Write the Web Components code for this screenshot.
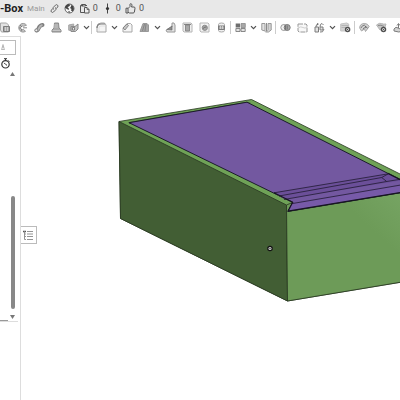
<!DOCTYPE html>
<html lang="en">
<head>
<meta charset="utf-8">
<title>Box</title>
<style>
html,body{height:100%;margin:0}
body{background:#fff;overflow:hidden;font-family:Roboto,"Noto Sans",sans-serif;color:#333}
</style>
</head>
<body>
<cad-app></cad-app>
<script>
const C = 'fill="none" stroke="#666" stroke-width="1"';
const ICONS = {
  thicken: `<path d="M.5 1h6l2 2v7h-7l-1-2z" fill="#ddd" stroke="#999"/><path d="M3.500 4.500h6v5h-6z" fill="#999" stroke="#666"/><path d="M5.500 5v4M7.500 5v4" stroke="#ddd" stroke-width=".7"/>`,
  revolve: `<path d="M9.500 3.200A4.300 4.300 0 1 0 8.500 9.300L6.500 7.500A1.900 1.900 0 1 1 6.500 4.300z" fill="#bbb" stroke="#888"/><path d="M3 3l2 2M2 6h2M4 9l1-2M6 5.800h4" stroke="#555" stroke-width=".8"/>`,
  sweep: `<path d="M2.500 8.500c3 0 1-5 6-5.500" fill="none" stroke="#666" stroke-width="4" stroke-linecap="round"/><path d="M3 8.200c3 0 1-4.400 5.500-5.200" fill="none" stroke="#aaa" stroke-width="2"/><circle cx="2.300" cy="8.300" r="1.400" fill="#eee" stroke="#666" stroke-width=".8"/>`,
  loft: `<path d="M3.500 1h4l.5 5 2 2v2H1V8l2-2z" fill="#999" stroke="#777"/><path d="M1.500 8.500h8M4 2v4M6 2v4" stroke="#ccc" stroke-width=".7"/>`,
  boxes: `<path d="M.7 3l5-1v7l-5-.8z" fill="#aaa" stroke="#999"/><path d="M3 4.500h4l3-2.500v5L7.500 9.500H3z" fill="#bbb" stroke="#777"/><path d="M4.500 5.500h2v2.500h-2z" fill="#eee" stroke="#555" stroke-width=".8"/>`,
  fillet: `<path d="M1 10V5q0-4 4-4h3.500l1.500 2v7z" fill="#f4f4f4" stroke="#999"/><path d="M1 6q0-4 4-4h4" fill="none" stroke="#666" stroke-width="1.200"/><path d="M3 10V6q0-2 2-2h5" fill="none" stroke="#ccc" stroke-width=".6"/>`,
  chamfer: `<path d="M1 10V6l4-4.500h3.500L10 3v7z" fill="#f4f4f4" stroke="#999"/><path d="M1 6l4-4 1.500 1.500L3 8z" fill="#bbb" stroke="#666" stroke-width=".8"/>`,
  draft: `<path d="M1 9.500l3-8h4l1.500 1.500v6.500z" fill="#999" stroke="#888"/><path d="M3.500 9l2-7M6 9l1-7" stroke="#666" stroke-width=".8"/>`,
  rib: `<path d="M1 8l6-3V1h2l1 2v7H2z" fill="#ddd" stroke="#888"/><path d="M2 7.500l5-3.500v4z" fill="#777" stroke="#555" stroke-width=".7"/>`,
  shell: `<path d="M1 1h8l1 1v8H2L1 9z" fill="#eee" stroke="#aaa"/><path d="M3.500 3h4v6h-4z" fill="#999" stroke="#777"/><path d="M2 2.500h7" stroke="#555" stroke-width=".8"/>`,
  hole: `<path d="M1 1h8l1 1v8H2L1 9z" fill="#f2f2f2" stroke="#aaa"/><circle cx="5.800" cy="5.800" r="2.600" fill="#999" stroke="#777"/><path d="M4 6.500q2-2 3.500-1.500" stroke="#555" fill="none"/>`,
  cyl: `<path d="M2.500 2.500v6q0 1.500 3 1.500t3-1.500v-6Q8.500 1 5.500 1t-3 1.500z" fill="#eee" stroke="#999"/><path d="M2.500 4h6v3.500h-6z" fill="#999" stroke="#666"/><path d="M4.500 4v3M6.500 4v3" stroke="#ddd" stroke-width=".7"/>`,
  pattern: `<path d="M.7 1.500h4.300v4H.7z" fill="#555"/><path d="M6 1.500h4.300v4H6z" fill="#999" stroke="#777" stroke-width=".8"/><path d="M.9 6.500H5v3H.9zM6 6.500h4.200v3H6z" fill="#ddd" stroke="#666" stroke-width=".9"/>`,
  mirror: `<path d="M.8 1.500H4V9L.8 8z" fill="#ddd" stroke="#888"/><path d="M10.200 1.500H7v6L4.500 10h3l2.700-2z" fill="#ccc" stroke="#888"/><path d="M5.500 1v8" stroke="#777"/>`,
  bool: `<circle cx="3.800" cy="5.500" r="3" fill="#eee" stroke="#888"/><circle cx="7.200" cy="5.500" r="3" fill="#999" stroke="#666"/><path d="M5.500 3.200v4.600M7.200 3.500v4" stroke="#555" stroke-width=".9"/>`,
  split: `<path d="M1 2h8l1 1v7H2L1 9z" fill="#f7f7f7" stroke="#888" stroke-dasharray="5 1"/><path d="M1 6q3-2 5-.5T10 5" fill="none" stroke="#bbb" stroke-width=".8"/>`,
  transform: `<path d="M1 5h3.500v5H1zM6 5h3v3H6z" fill="#ddd" stroke="#666"/><path d="M2 5q0-3 2-3M6 5q0-3.500 2-3.500L9.500 3M6 10q3 1 4-3" fill="none" stroke="#666"/><path d="M3 1l2 1-2 1.500z" fill="#555"/>`,
  del: `<path d="M.7 2l6-1 2 1v5l-3 2h-5z" fill="#ccc" stroke="#bbb"/><path d="M1.500 3.500h7M1.500 5.500h5" stroke="#999" stroke-width=".7"/><circle cx="7.600" cy="7.600" r="2" fill="#fff" stroke="#333" stroke-width="1.500"/><path d="M7 7l1.200 1.200" stroke="#333"/>`,
  surface: `<path d="M.7 6q0-4.500 5-4.500 3 0 4.500 3L6.500 9.500 5.500 7 2.500 9z" fill="#ccc" stroke="#999"/><path d="M2 6q1-3 4-3M4 7.500q0-2 3-2" stroke="#666" fill="none"/><path d="M6 4l2.500 2" stroke="#444"/>`,
  delsurf: `<path d="M.5 3q3-2.500 5-1.500T10 2L8.500 6.500 4 8z" fill="#bbb" stroke="#aaa"/><path d="M2 3.500q3-1 6 1" stroke="#777" fill="none"/><circle cx="7.500" cy="7.500" r="2" fill="#fff" stroke="#333" stroke-width="1.500"/><path d="M7 7l1.200 1.200" stroke="#333"/>`,
  move: `<path d="M1 7q2-3 4-1t5 0v3q-4 2-9 0z" fill="#ccc" stroke="#666"/><path d="M5.500 6V2M4 3.500l1.500-2 1.500 2" fill="none" stroke="#666"/>`,
  link: `<path d="M5 6.600 4.300 6q-.7-.8 0-1.600l2.200-2.300q1-1 2 0 1 .9.200 1.900L7.300 5.500M6 4.400l.8.700q.7.800 0 1.600L4.500 9q-1 1-2 0-1-.9-.1-1.900l1.300-1.500" ${C}/>`,
  globe: `<circle cx="5.500" cy="5.500" r="4.500" fill="#f5f5f5" stroke="#555" stroke-width=".9"/><path d="M1 5q0-3 3.500-4l2 .8L5 3.500 3.500 4 5 5.800 4.500 7 3 6z M7 2l2 1 1 3-1.500 2.500L7 7.500 7.500 6 6 5l1-1.500z M4 8l2 .5-.5 1.500z" fill="#444"/>`,
  copy: `<path d="M4 2.500H1.500v7H5M7 2.500H8M2.500 1.500h4v1.500h-4z" fill="none" stroke="#555"/><path d="M5.500 4.500H8l2 2v3.500H5.500z" fill="#eee" stroke="#555"/><path d="M8 4.500v2h2" fill="none" stroke="#555" stroke-width=".8"/>`,
  version: `<path d="M5.500.5v10" stroke="#444"/><circle cx="5.500" cy="5.500" r="1.600" fill="#333"/>`,
  like: `<path d="M1 5.200h2V10H1zM3 5.500l2-2V1.300q.2-.8 1-.6 1 .3 1 1.500L6.500 4H9q1.200.2 1 1.200L9.400 9q-.2.900-1.200 1H4.500L3 9.300" fill="none" stroke="#555" stroke-linejoin="round"/>`,
  timer: `<circle cx="5.500" cy="6.300" r="3.700" fill="#fff" stroke="#333" stroke-width="1.200"/><path d="M4 .7h3M5.500 1v2M8.500 2.500l1 1M5.500 6.300 4 4.800M5.500 6.300l1.500 1" stroke="#333"/>`,
  outline: `<path d="M0 1.500h3" stroke="#555" stroke-width="1.500"/><path d="M4 1.500h6M4 4h6M4 6.500h6M4 9.500h6M1.500 1v8.500M1.500 4H3M1.500 6.500H3M1.500 9.500H3" stroke="#888" fill="none" stroke-width=".9"/>`,
  chev: `<path d="M3 4.200 5.500 6.700 8 4.200" fill="none" stroke="#333" stroke-width="1.200"/>`
};

const define = (name, html) => {
  const t = document.createElement('template');
  t.innerHTML = html;
  customElements.define(name, class extends HTMLElement {
    constructor() {
      super();
      this.attachShadow({mode: 'open'}).append(t.content.cloneNode(true));
    }
  });
};

customElements.define('cad-icon', class extends HTMLElement {
  connectedCallback() {
    if (this.shadowRoot) return;
    this.attachShadow({mode: 'open'}).innerHTML =
      `<style>:host{display:block;flex:none;width:11px;height:11px}svg{display:block;width:100%;height:100%}</style>
       <svg viewBox="0 0 11 11" aria-hidden="true">${ICONS[this.getAttribute('name')]}</svg>`;
  }
});

customElements.define('tool-button', class extends HTMLElement {
  connectedCallback() {
    if (this.shadowRoot) return;
    const n = this.getAttribute('icon');
    this.attachShadow({mode: 'open'}).innerHTML =
      `<style>:host{display:flex;flex:none;width:17px;height:17px;opacity:.85}
       :host([icon=chev]){width:9px}
       button{all:unset;display:flex;flex:1;align-items:center;justify-content:center;min-width:0}</style>
       <button type="button" aria-label="${n}"><cad-icon name="${n}"></cad-icon></button>`;
  }
});

define('tool-separator', `<style>:host{flex:none;width:1px;height:13px;margin-right:1px;background:#ccc}</style>`);

define('doc-header', `<style>
:host{display:flex;align-items:center;box-sizing:border-box;height:18px;padding-bottom:1px;background:#e8e8e8;white-space:nowrap}
h1{margin:0;font-size:11px;line-height:17px;font-weight:700;color:#222}
span{font-size:8px;line-height:17px;color:#999;margin:0 4px}
button{all:unset;display:flex;align-items:center;gap:3px;font-size:9px;line-height:17px;color:#555}
nav{display:flex;align-items:center;gap:4px}
</style>
<h1>-Box</h1><span>Main</span>
<nav><button type="button" aria-label="Link"><cad-icon name="link"></cad-icon></button>
<button type="button" aria-label="Public"><cad-icon name="globe"></cad-icon></button>
<button type="button"><cad-icon name="copy"></cad-icon>0</button>
<button type="button"><cad-icon name="version"></cad-icon>0</button>
<button type="button"><cad-icon name="like"></cad-icon>0</button></nav>`);

const tools = 'thicken revolve sweep loft boxes chev | fillet chev chamfer draft chev rib shell hole cyl | pattern chev mirror | bool split transform chev del | surface delsurf move';
define('tool-bar', `<style>
:host{display:flex;align-items:center;height:18px;background:#fff;overflow:hidden}
div{display:flex;align-items:center;margin-left:-3px}
</style><div>${tools.split(' ').map(t => t === '|' ? '<tool-separator></tool-separator>' : `<tool-button icon="${t}"></tool-button>`).join('')}</div>`);

define('feature-panel', `<style>
:host{display:flex;flex-direction:column;box-sizing:border-box;width:21px;flex:none;border:solid #ddd;border-width:1px 1px 0 0;background:#fff}
label{display:flex;align-items:center;box-sizing:border-box;height:15px;margin:3px 4px 0 0;border:solid #bbb;border-width:1px 1px 1px 0}
svg{display:block}
input{all:unset;flex:1;min-width:0;width:0}
.timer{all:unset;display:block;margin-top:2px;height:12px}
.rail{display:flex;flex-direction:column;align-items:center;box-sizing:border-box;height:69%;padding:0 1px 2px 8px;margin:3px 2px 0 0;border-bottom:1px solid #ddd}
.space{flex:1}
.thumb{width:4px;height:46%;border-radius:2px;background:#888;margin-bottom:6px}
hr{width:8px;height:1px;margin:-2px 0 0;border:0;background:#999}
</style>
<label><svg width="8" height="7" viewBox="0 0 8 7"><path d="M3 .5 1.500 6M3 .5 4.500 6M2 3h2M2 5.500h2" fill="none" stroke="#aaa" stroke-width=".8"/></svg><input aria-label="Filter"></label>
<button class="timer" type="button" aria-label="Rebuild time"><cad-icon name="timer"></cad-icon></button>
<div class="rail"><svg width="5" height="4"><path d="M2.500 0 5 4H0z" fill="#777"/></svg><div class="space"></div><div class="thumb"></div><svg width="5" height="4"><path d="M0 0h5L2.500 4z" fill="#777"/></svg></div><hr>`);

define('model-view', `<style>
:host{display:block;position:relative;flex:1;min-width:0;overflow:hidden}
svg{display:block;width:100%;height:100%}
button{all:unset;position:absolute;left:0;top:190px;box-sizing:border-box;width:16px;height:18px;display:flex;align-items:center;justify-content:center;border:1px solid #bbb;border-left:0;background:#fff}
</style>
<svg viewBox="21 36 379 364" preserveAspectRatio="xMinYMin slice" role="img" aria-label="Box with sliding lid">
<defs><linearGradient id="f" x1="0" y1="1" x2="1" y2="0"><stop offset=".7" stop-color="#6d9b58"/><stop offset="1" stop-color="#76a463"/></linearGradient></defs>
<g stroke-linejoin="round">
<path d="M119 121.500 251.500 99.500 402 175V282L287.500 301 120.500 218.500z" fill="#6fa257" stroke="#27361f" stroke-width=".8"/>
<path d="M128 122.300 247 101.700 251 103 130 124z" fill="#405c35"/>
<path d="M119 121.500 286.500 205 287.500 301 120.500 218.500z" fill="#425e34" stroke="#27361f" stroke-width=".8"/>
<path d="M286.500 205 292.500 202.500 288 211.500 402 192.500V282L287.500 301z" fill="url(#f)" stroke="#27361f" stroke-width=".8"/>
<path d="M129 122.700 247 102.200 402 180.500V192.300L288 211.200 292.700 202.300z" fill="#7358a0" stroke="#1c1b2b" stroke-width="1"/>
<path d="M274 192.800 388 174 402 180.500 284 199z" fill="#6b4f99"/>
<path d="M291.500 203.700 402 184.800V192L288.500 211z" fill="#775aa8"/>
<path d="M274 192.800 388.300 173.800 381.700 177.500 279 196M284 199.500 386.700 181.500 402 179M381.700 177.500l5 4M291.500 203.700 402 184.800" fill="none" stroke="#211a32" stroke-width=".8"/>
<path d="M274 192.800 292.700 202.300 288 211.200 402 192.300M388 173.400l14 7.100" fill="none" stroke="#171522" stroke-width="1.200"/>
</g>
<circle cx="270" cy="248.500" r="2.200" fill="#ddd" stroke="#111" stroke-width="1.200"/><circle cx="270" cy="248.500" r=".7" fill="#333"/>
</svg>
<button type="button" aria-label="Feature list"><cad-icon name="outline"></cad-icon></button>`);

define('cad-app', `<style>
:host{display:flex;flex-direction:column;height:100vh;background:#fff}
main{display:flex;flex:1;min-height:0}
</style><doc-header></doc-header><tool-bar></tool-bar><main><feature-panel></feature-panel><model-view></model-view></main>`);
</script>
</body>
</html>
